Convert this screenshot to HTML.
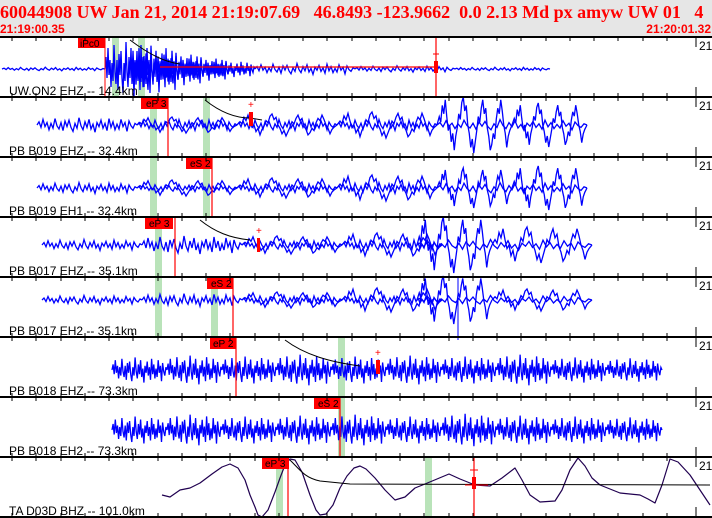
<!DOCTYPE html>
<html><head><meta charset="utf-8"><style>
html,body{margin:0;padding:0;width:712px;height:518px;overflow:hidden;background:#fff}
svg{display:block}
</style></head><body>
<svg width="712" height="518" viewBox="0 0 712 518" xmlns="http://www.w3.org/2000/svg">
<defs>
<path id="n" d="M0 0 L2 -4 4 3 6 -7 8 2 10 -3 12 6 14 -2 16 4 18 -8 20 1 22 5 24 -3 26 7 28 -5 30 2 32 -6 34 3 36 8 38 -2 40 4 42 -9 44 1 46 6 48 -4 50 3 52 -7 54 5 56 -1 58 9 60 -3 62 2 64 -6 66 4 68 -2 70 7 72 -8 74 3 76 -4 78 6 80 -1 82 5 84 -7 86 2 88 -3 90 8 92 -5 94 1 96 4 98 -2 100 0" fill="none" stroke="#0000ff" stroke-width="1.3" vector-effect="non-scaling-stroke"/>
<path id="w" d="M0 0 L3 -3 5 -1 7 -7 9 -4 11 -9 13 -3 15 2 17 0 19 6 21 3 23 9 25 4 27 1 29 -4 31 -2 33 -8 35 -10 37 -5 39 -7 41 0 43 3 45 8 47 5 49 10 51 6 53 2 55 -3 57 -1 59 -6 61 -9 63 -4 65 -6 67 1 69 4 71 9 73 7 75 3 77 5 79 -2 81 -6 83 -4 85 -9 87 -5 89 0 91 3 93 8 95 4 97 2 100 0" fill="none" stroke="#0000ff" stroke-width="1.3" vector-effect="non-scaling-stroke"/>
</defs>
<rect x="0" y="0" width="712" height="36" fill="#e6e6e6"/>
<text x="0" y="18" font-family="Liberation Serif" font-weight="bold" font-size="18" fill="#ff0000" style="white-space:pre">60044908 UW Jan 21, 2014 21:19:07.69   46.8493 -123.9662  0.0 2.13 Md px amyw UW 01   4</text>
<text x="0" y="33" font-family="Liberation Sans" font-weight="bold" font-size="12" fill="#ff0000">21:19:00.35</text>
<text x="711" y="33" text-anchor="end" font-family="Liberation Sans" font-weight="bold" font-size="12" fill="#ff0000">21:20:01.32</text>

<g fill="#b9e3b9">
<rect x="112" y="38" width="7" height="58"/><rect x="138" y="38" width="7" height="58"/>
<rect x="150" y="98" width="7" height="118"/><rect x="203" y="98" width="7" height="118"/>
<rect x="155" y="218" width="7" height="118"/><rect x="211" y="278" width="7" height="58"/>
<rect x="338" y="338" width="7" height="118"/>
<rect x="276" y="458" width="7" height="60"/><rect x="425" y="458" width="7" height="60"/>
</g>

<!-- panel 0 -->
<use href="#n" transform="translate(2,69) scale(1.03,0.2)"/>
<use href="#n" transform="translate(105,69) scale(0.5,3.0)"/>
<use href="#n" transform="translate(130,69) scale(0.5,2.6)"/>
<use href="#n" transform="translate(155,69) scale(0.5,1.8)"/>
<use href="#n" transform="translate(180,69) scale(0.5,1.3)"/>
<use href="#n" transform="translate(205,69) scale(0.5,0.9)"/>
<use href="#n" transform="translate(255,69) scale(1,0.6)"/>
<use href="#n" transform="translate(355,69) scale(1,0.35)"/>
<use href="#n" transform="translate(455,69) scale(0.95,0.2)"/>
<path d="M130 40 C150 55 165 62 180 64" fill="none" stroke="#000" stroke-width="1"/>
<line x1="160" y1="67" x2="435" y2="67" stroke="#f00" stroke-width="1.2"/>
<line x1="436" y1="37" x2="436" y2="97" stroke="#f00" stroke-width="1.2"/>
<rect x="434" y="61" width="4" height="12" fill="#f00"/>
<line x1="433" y1="54" x2="439" y2="54" stroke="#f00"/>
<line x1="105" y1="38" x2="105" y2="96" stroke="#f00"/>
<rect x="78" y="38" width="27" height="10" fill="#f00"/><text x="80" y="47" font-family="Liberation Sans" font-size="10" fill="#000">iPc0</text>

<!-- panel 1 -->
<use href="#n" transform="translate(37,125) scale(1,0.8)"/>
<use href="#w" transform="translate(137,125) scale(1,0.8)"/>
<use href="#n" transform="translate(137,125) scale(1,0.6)"/>
<use href="#w" transform="translate(237,125) scale(1,1.1)"/>
<use href="#n" transform="translate(237,125) scale(1,0.6)"/>
<use href="#w" transform="translate(337,125) scale(1,1.3)"/>
<use href="#n" transform="translate(337,125) scale(1,0.6)"/>
<use href="#w" transform="translate(437,125) scale(0.75,2.8)"/>
<use href="#w" transform="translate(512,125) scale(0.75,2.2)"/>
<use href="#n" transform="translate(437,125) scale(1.5,0.6)"/>
<path d="M205 100 C220 112 235 118 250 118 L262 120" fill="none" stroke="#000"/>
<line x1="168" y1="98" x2="168" y2="157" stroke="#f00" stroke-width="1.2"/>
<rect x="141" y="98" width="27" height="11" fill="#f00"/><text x="146" y="107" font-family="Liberation Sans" font-size="10">eP 3</text>
<rect x="249" y="112" width="4" height="14" fill="#f00"/><text x="248" y="108" font-size="10" fill="#f00" font-family="Liberation Sans">+</text>

<!-- panel 2 -->
<use href="#n" transform="translate(37,188) scale(1,0.6)"/>
<use href="#w" transform="translate(137,188) scale(1,0.8)"/>
<use href="#n" transform="translate(137,188) scale(1,0.4)"/>
<use href="#w" transform="translate(237,188) scale(1,1.0)"/>
<use href="#n" transform="translate(237,188) scale(1,0.5)"/>
<use href="#w" transform="translate(337,188) scale(1,1.3)"/>
<use href="#n" transform="translate(337,188) scale(1,0.6)"/>
<use href="#w" transform="translate(437,188) scale(0.75,2.0)"/>
<use href="#w" transform="translate(512,188) scale(0.75,2.2)"/>
<use href="#n" transform="translate(437,188) scale(1.5,0.6)"/>
<line x1="212" y1="158" x2="212" y2="217" stroke="#f00" stroke-width="1.2"/>
<rect x="186" y="158" width="26" height="11" fill="#f00"/><text x="190" y="167" font-family="Liberation Sans" font-size="10">eS 2</text>

<!-- panel 3 -->
<use href="#n" transform="translate(42,245) scale(1,0.6)"/>
<use href="#n" transform="translate(142,245) scale(1,1.0)"/>
<use href="#w" transform="translate(242,245) scale(1,0.9)"/>
<use href="#n" transform="translate(242,245) scale(1,0.5)"/>
<use href="#w" transform="translate(342,245) scale(1,1.2)"/>
<use href="#n" transform="translate(342,245) scale(1,0.6)"/>
<use href="#w" transform="translate(417,245) scale(0.75,2.8)"/>
<use href="#w" transform="translate(492,245) scale(1,1.8)"/>
<use href="#n" transform="translate(417,245) scale(1.75,0.6)"/>
<path d="M200 220 C215 232 230 238 250 240" fill="none" stroke="#000"/>
<line x1="175" y1="218" x2="175" y2="277" stroke="#f00" stroke-width="1.2"/>
<rect x="145" y="218" width="28" height="11" fill="#f00"/><text x="149" y="227" font-family="Liberation Sans" font-size="10">eP 3</text>
<rect x="257" y="238" width="3" height="14" fill="#f00"/><text x="256" y="234" font-size="10" fill="#f00" font-family="Liberation Sans">+</text>

<!-- panel 4 -->
<use href="#n" transform="translate(42,300) scale(1,0.5)"/>
<use href="#n" transform="translate(142,300) scale(1,0.7)"/>
<use href="#w" transform="translate(242,300) scale(1,0.8)"/>
<use href="#n" transform="translate(242,300) scale(1,0.5)"/>
<use href="#w" transform="translate(342,300) scale(1,1.2)"/>
<use href="#n" transform="translate(342,300) scale(1,0.5)"/>
<use href="#w" transform="translate(417,300) scale(0.75,2.4)"/>
<use href="#w" transform="translate(492,300) scale(1,1.1)"/>
<use href="#n" transform="translate(417,300) scale(1.75,0.5)"/>
<line x1="458" y1="278" x2="458" y2="340" stroke="#00f"/>
<line x1="233" y1="278" x2="233" y2="337" stroke="#f00" stroke-width="1.2"/>
<rect x="207" y="278" width="26" height="11" fill="#f00"/><text x="211" y="287" font-family="Liberation Sans" font-size="10">eS 2</text>

<!-- panel 5 -->
<use href="#n" transform="translate(112,370) scale(0.55,1.4)"/>
<use href="#n" transform="translate(167,370) scale(0.55,1.6)"/>
<use href="#n" transform="translate(222,370) scale(0.55,1.5)"/>
<use href="#n" transform="translate(277,370) scale(0.55,1.7)"/>
<use href="#n" transform="translate(332,370) scale(0.55,1.5)"/>
<use href="#n" transform="translate(387,370) scale(0.55,1.6)"/>
<use href="#n" transform="translate(442,370) scale(0.55,1.5)"/>
<use href="#n" transform="translate(497,370) scale(0.55,1.7)"/>
<use href="#n" transform="translate(552,370) scale(0.55,1.4)"/>
<use href="#n" transform="translate(607,370) scale(0.55,1.3)"/>
<path d="M285 340 C305 355 330 362 360 366" fill="none" stroke="#000"/>
<line x1="236" y1="338" x2="236" y2="397" stroke="#f00" stroke-width="1.2"/>
<rect x="210" y="338" width="26" height="11" fill="#f00"/><text x="213" y="347" font-family="Liberation Sans" font-size="10">eP 2</text>
<rect x="376" y="360" width="4" height="14" fill="#f00"/><text x="375" y="356" font-size="10" fill="#f00" font-family="Liberation Sans">+</text>

<!-- panel 6 -->
<use href="#n" transform="translate(112,430) scale(0.55,1.5)"/>
<use href="#n" transform="translate(167,430) scale(0.55,1.7)"/>
<use href="#n" transform="translate(222,430) scale(0.55,1.5)"/>
<use href="#n" transform="translate(277,430) scale(0.55,1.6)"/>
<use href="#n" transform="translate(332,430) scale(0.55,1.7)"/>
<use href="#n" transform="translate(387,430) scale(0.55,1.5)"/>
<use href="#n" transform="translate(442,430) scale(0.55,1.8)"/>
<use href="#n" transform="translate(497,430) scale(0.55,1.6)"/>
<use href="#n" transform="translate(552,430) scale(0.55,1.5)"/>
<use href="#n" transform="translate(607,430) scale(0.55,1.4)"/>
<line x1="340" y1="398" x2="340" y2="457" stroke="#f00" stroke-width="1.2"/>
<rect x="314" y="398" width="26" height="11" fill="#f00"/><text x="318" y="407" font-family="Liberation Sans" font-size="10">eS 2</text>

<!-- panel 7 -->
<path d="M162 495 L170 497 180 490 190 488 200 483 212 474 222 467 230 464 238 468 245 480 250 495 255 507 258 515 262 517 268 510 275 492 280 478 285 465 290 459 295 460 302 472 310 495 316 510 320 515 326 514 333 505 340 488 347 476 354 468 360 466 366 469 375 478 385 490 395 500 405 497 415 488 425 484 437 479 449 474 460 479 475 485 490 486 502 478 515 468 522 480 530 495 540 502 555 501 562 490 570 470 578 458 585 466 592 478 600 485 620 493 640 495 648 499 655 503 662 485 670 459 678 462 690 475 700 490 710 505" fill="none" stroke="#200050" stroke-width="1.2" stroke-linejoin="round"/>
<path d="M290 460 C300 470 305 478 320 481 L350 484 L710 485" fill="none" stroke="#000"/>
<line x1="288" y1="458" x2="288" y2="518" stroke="#f00" stroke-width="1.2"/>
<rect x="262" y="458" width="27" height="11" fill="#f00"/><text x="265" y="467" font-family="Liberation Sans" font-size="10">eP 3</text>
<line x1="474" y1="458" x2="474" y2="518" stroke="#f00" stroke-width="1.2"/>
<rect x="472" y="477" width="4" height="12" fill="#f00"/><line x1="470" y1="470" x2="478" y2="470" stroke="#f00"/>
<line x1="465" y1="485" x2="488" y2="485" stroke="#f00"/>

<g stroke="#000" stroke-width="2">
<line x1="0" y1="37" x2="712" y2="37"/><line x1="0" y1="97" x2="712" y2="97"/>
<line x1="0" y1="157" x2="712" y2="157"/><line x1="0" y1="217" x2="712" y2="217"/>
<line x1="0" y1="277" x2="712" y2="277"/><line x1="0" y1="337" x2="712" y2="337"/>
<line x1="0" y1="397" x2="712" y2="397"/><line x1="0" y1="457" x2="712" y2="457"/>
<line x1="0" y1="517" x2="712" y2="517"/>
</g>
<g stroke="#000" stroke-width="1">
<path d="M12 37v4M36 37v4M61 37v4M85 37v4M109 37v4M133 37v4M158 37v4M182 37v4M206 37v4M230 37v4M255 37v4M279 37v4M303 37v4M327 37v4M352 37v4M376 37v4M400 37v4M424 37v4M449 37v4M473 37v4M497 37v4M521 37v4M546 37v4M570 37v4M594 37v4M618 37v4M643 37v4M667 37v4M696 37v10" id="tk"/>
<use href="#tk" y="60"/><use href="#tk" y="120"/><use href="#tk" y="180"/><use href="#tk" y="240"/><use href="#tk" y="300"/><use href="#tk" y="360"/><use href="#tk" y="420"/>
<path d="M12 97v-4M36 97v-4M61 97v-4M85 97v-4M109 97v-4M133 97v-4M158 97v-4M182 97v-4M206 97v-4M230 97v-4M255 97v-4M279 97v-4M303 97v-4M327 97v-4M352 97v-4M376 97v-4M400 97v-4M424 97v-4M449 97v-4M473 97v-4M497 97v-4M521 97v-4M546 97v-4M570 97v-4M594 97v-4M618 97v-4M643 97v-4M667 97v-4M696 97v-10" id="tb"/>
<use href="#tb" y="60"/><use href="#tb" y="120"/><use href="#tb" y="180"/><use href="#tb" y="240"/><use href="#tb" y="300"/><use href="#tb" y="360"/><use href="#tb" y="420"/>
</g>

<g font-family="Liberation Sans" font-size="12" fill="#000">
<text x="9" y="95">UW.ON2 EHZ -- 14.4km</text>
<text x="9" y="155">PB B019 EHZ -- 32.4km</text>
<text x="9" y="215">PB B019 EH1 -- 32.4km</text>
<text x="9" y="275">PB B017 EHZ -- 35.1km</text>
<text x="9" y="335">PB B017 EH2 -- 35.1km</text>
<text x="9" y="395">PB B018 EHZ -- 73.3km</text>
<text x="9" y="455">PB B018 EH2 -- 73.3km</text>
<text x="9" y="515">TA D03D BHZ -- 101.0km</text>
<text x="699" y="50">21</text><text x="699" y="110">21</text><text x="699" y="170">21</text><text x="699" y="230">21</text>
<text x="699" y="290">21</text><text x="699" y="350">21</text><text x="699" y="410">21</text><text x="699" y="470">21</text>
</g>
</svg>
</body></html>
